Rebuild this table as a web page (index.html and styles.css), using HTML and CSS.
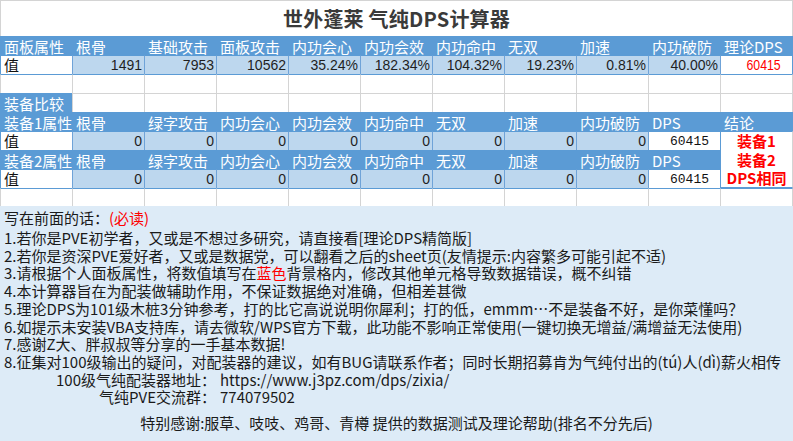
FILE: index.html
```html
<!DOCTYPE html>
<html lang="zh-CN">
<head>
<meta charset="utf-8">
<title>世外蓬莱 气纯DPS计算器</title>
<link rel="stylesheet" href="styles.css">
</head>
<body>
<div class="sheet">
  <div class="grid">
    <div class="c title last">世外蓬莱 气纯DPS计算器</div>

    <div class="c hd">面板属性</div>
    <div class="c hd">根骨</div>
    <div class="c hd">基础攻击</div>
    <div class="c hd">面板攻击</div>
    <div class="c hd">内功会心</div>
    <div class="c hd">内功会效</div>
    <div class="c hd">内功命中</div>
    <div class="c hd">无双</div>
    <div class="c hd">加速</div>
    <div class="c hd">内功破防</div>
    <div class="c hd last">理论DPS</div>

    <div class="c lbl">值</div>
    <div class="c val">1491</div>
    <div class="c val">7953</div>
    <div class="c val">10562</div>
    <div class="c val">35.24%</div>
    <div class="c val">182.34%</div>
    <div class="c val">104.32%</div>
    <div class="c val">19.23%</div>
    <div class="c val">0.81%</div>
    <div class="c val">40.00%</div>
    <div class="c dps last"><span class="red">60415</span></div>

    <div class="c e bt"></div><div class="c e bt"></div><div class="c e bt"></div><div class="c e bt"></div>
    <div class="c e bt"></div><div class="c e bt"></div><div class="c e bt"></div><div class="c e bt"></div>
    <div class="c e bt"></div><div class="c e bt"></div><div class="c e bt last"></div>

    <div class="c hd">装备比较</div>
    <div class="c e"></div><div class="c e"></div><div class="c e"></div><div class="c e"></div><div class="c e"></div>
    <div class="c e"></div><div class="c e"></div><div class="c e"></div><div class="c e"></div><div class="c e last"></div>

    <div class="c hd">装备1属性</div>
    <div class="c hd">根骨</div>
    <div class="c hd">绿字攻击</div>
    <div class="c hd">内功会心</div>
    <div class="c hd">内功会效</div>
    <div class="c hd">内功命中</div>
    <div class="c hd">无双</div>
    <div class="c hd">加速</div>
    <div class="c hd">内功破防</div>
    <div class="c hd">DPS</div>
    <div class="c hd last">结论</div>

    <div class="c lbl">值</div>
    <div class="c val">0</div>
    <div class="c val">0</div>
    <div class="c val">0</div>
    <div class="c val">0</div>
    <div class="c val">0</div>
    <div class="c val">0</div>
    <div class="c val">0</div>
    <div class="c val">0</div>
    <div class="c dps mono">60415</div>
    <div class="c verdict last"><span>装备1</span><span>装备2</span><span>DPS相同</span></div>

    <div class="c hd">装备2属性</div>
    <div class="c hd">根骨</div>
    <div class="c hd">绿字攻击</div>
    <div class="c hd">内功会心</div>
    <div class="c hd">内功会效</div>
    <div class="c hd">内功命中</div>
    <div class="c hd">无双</div>
    <div class="c hd">加速</div>
    <div class="c hd">内功破防</div>
    <div class="c hd">DPS</div>

    <div class="c lbl">值</div>
    <div class="c val">0</div>
    <div class="c val">0</div>
    <div class="c val">0</div>
    <div class="c val">0</div>
    <div class="c val">0</div>
    <div class="c val">0</div>
    <div class="c val">0</div>
    <div class="c val">0</div>
    <div class="c dps mono">60415</div>

    <div class="c e bt"></div><div class="c e bt"></div><div class="c e bt"></div><div class="c e bt"></div>
    <div class="c e bt"></div><div class="c e bt"></div><div class="c e bt"></div><div class="c e bt"></div>
    <div class="c e bt"></div><div class="c e bt"></div><div class="c e bt last"></div>
  </div>

  <div class="notes">
    <p class="first">写在前面的话：<span class="warn">(必读)</span></p>
    <p>1.若你是PVE初学者，又或是不想过多研究，请直接看[理论DPS精简版]</p>
    <p>2.若你是资深PVE爱好者，又或是数据党，可以翻看之后的sheet页(友情提示:内容繁多可能引起不适)</p>
    <p>3.请根据个人面板属性，将数值填写在<span class="warn">蓝色</span>背景格内，修改其他单元格导致数据错误，概不纠错</p>
    <p>4.本计算器旨在为配装做辅助作用，不保证数据绝对准确，但相差甚微</p>
    <p>5.理论DPS为101级木桩3分钟参考，打的比它高说说明你犀利；打的低，emmm…不是装备不好，是你菜懂吗？</p>
    <p>6.如提示未安装VBA支持库，请去微软/WPS官方下载，此功能不影响正常使用(一键切换无增益/满增益无法使用)</p>
    <p>7.感谢Z大、胖叔叔等分享的一手基本数据!</p>
    <p>8.征集对100级输出的疑问，对配装器的建议，如有BUG请联系作者；同时长期招募肯为气纯付出的(tú)人(dì)薪火相传</p>
    <div class="kv">
      <span class="k">100级气纯配装器地址：</span><span class="v">https://www.j3pz.com/dps/zixia/</span>
      <span class="k">气纯PVE交流群：</span><span class="v">774079502</span>
    </div>
    <p class="thanks">特别感谢:服草、吱吱、鸡哥、青樽 提供的数据测试及理论帮助(排名不分先后)</p>
  </div>
</div>
</body>
</html>
```

FILE: styles.css
```css
html, body {
  margin: 0;
  padding: 0;
  background: #ffffff;
}

body {
  font-family: "Noto Sans CJK SC", "Noto Sans", sans-serif;
  color: #1a1a1a;
  width: 793px;
  height: 441px;
  overflow: hidden;
}

.grid {
  display: grid;
  grid-template-columns: repeat(10, 72px) 73px;
  grid-template-rows: 36px repeat(8, 19px) 18px;
}

.c {
  box-sizing: border-box;
  border-top: 1px solid #d4d4d4;
  border-left: 1px solid #d4d4d4;
  font-size: 15px;
  line-height: 18px;
  white-space: nowrap;
}

.c.last {
  border-right: 1px solid #d4d4d4;
}

.title {
  grid-column: 1 / -1;
  text-align: center;
  font-size: 20px;
  font-weight: bold;
  line-height: 35px;
  color: #3a3a3a;
  letter-spacing: 0.2px;
}

.hd {
  background: #5b9bd5;
  border-color: #5b9bd5;
  color: #ffffff;
  padding-left: 3px;
  line-height: 19px;
}

.hd.last {
  border-right-color: #5b9bd5;
}

.lbl {
  background: #ffffff;
  border-top-color: #5b9bd5;
  border-left-color: #5b9bd5;
  padding-left: 3px;
  color: #111111;
}

.val {
  background: #bdd7ee;
  border-top-color: #5b9bd5;
  border-left-color: #6fa3d8;
  text-align: right;
  padding-right: 2px;
  font-family: "Liberation Sans", Arial, sans-serif;
  font-size: 14px;
  line-height: 19px;
  color: #1f1f1f;
}

.dps {
  background: #ffffff;
  border-top-color: #5b9bd5;
  border-left-color: #6fa3d8;
  text-align: right;
  padding-right: 11px;
  line-height: 19px;
}

.dps.last {
  border-right-color: #5b9bd5;
}

.red {
  display: inline-block;
  vertical-align: top;
  color: #ff0000;
  font-family: "Liberation Sans", Arial, sans-serif;
  font-size: 15px;
  line-height: 18px;
  transform: scaleX(0.82);
  transform-origin: right center;
}

.mono {
  color: #111111;
  font-family: "Liberation Mono", monospace;
  font-size: 13px;
}

.verdict {
  grid-row: span 3;
  background: #ffffff;
  border-top-color: #5b9bd5;
  border-left-color: #5b9bd5;
  border-right-color: #5b9bd5;
  border-bottom: 1px solid #5b9bd5;
  display: flex;
  flex-direction: column;
  align-items: center;
  color: #ff0000;
  font-weight: bold;
  font-size: 15px;
}

.verdict span {
  height: 18.6px;
  line-height: 18.6px;
}

.e.bt {
  border-top-color: #5b9bd5;
}

.notes {
  background: #ddebf7;
  height: 235px;
  box-sizing: border-box;
  padding: 3px 0 0 4px;
  font-size: 15px;
  line-height: 17.7px;
  color: #1a1a1a;
  white-space: nowrap;
}

.notes p {
  margin: 0;
}

.notes .first {
  margin-bottom: 2.3px;
}

.warn {
  color: #ff0000;
}

.kv {
  display: grid;
  grid-template-columns: 212px auto;
}

.kv .k {
  text-align: right;
}

.kv .v {
  padding-left: 4px;
}

.thanks {
  text-align: center;
  margin-top: 8px !important;
  padding-right: 4px;
}
```
